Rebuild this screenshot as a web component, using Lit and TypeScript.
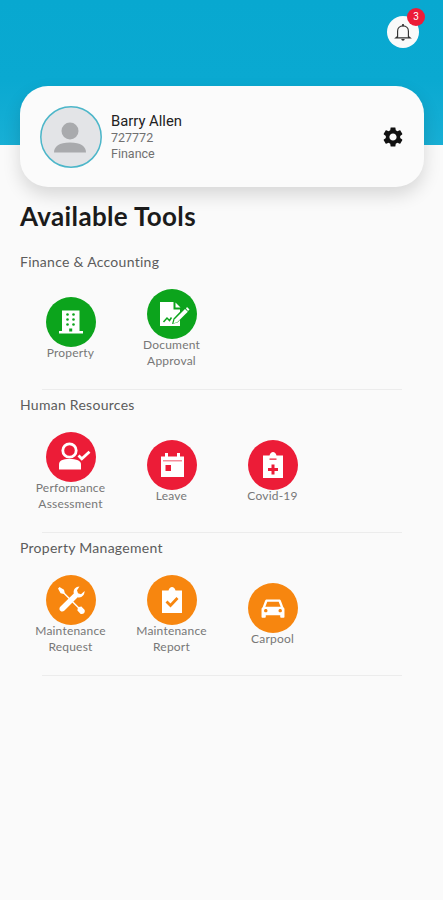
import { LitElement, html, css, svg } from "lit";
import { customElement } from "lit/decorators.js";

const G = "#0ca41c";
const R = "#ec1c37";
const O = "#f7860f";

const icons: Record<string, unknown> = {
  building: svg`<path fill="#fff" d="M16 13.500h17.500V34H37v2.500H13V34h3z"/><g fill="${G}"><circle cx="21.500" cy="17.500" r="1.300"/><circle cx="27.500" cy="17.500" r="1.300"/><circle cx="21.500" cy="22.500" r="1.300"/><circle cx="27.500" cy="22.500" r="1.300"/><circle cx="21.500" cy="27.500" r="1.300"/><circle cx="27.500" cy="27.500" r="1.300"/><path d="M23.200 31.500h3v3h-3z"/></g>`,
  doc: svg`<path fill="#fff" d="M13 13h13.500v7.500H33v2.300L26.500 29.500l-1.500 5.500 5.500-1.500 2.500-2.500v6H13z"/><path fill="#fff" d="M28.500 13.500l5 5h-5z"/><path fill="#fff" d="M27.500 30.500L38 20l2.800 2.800-10.600 10.400-3.700 1z"/><path fill="#fff" d="M39 19.500l1-1.500 2.500 2.500-1.500 1.500z"/><path fill="none" stroke="${G}" stroke-width="1.500" d="M16.500 33l3.500-4 2.500 2.500 2-3"/>`,
  person: svg`<circle cx="23.500" cy="18.500" r="6.700" fill="none" stroke="#fff" stroke-width="2.800"/><path fill="#fff" d="M13 37.500v-5c0-4 3.500-5.500 10.500-5.500s11.500 1.500 11.500 5.500v5z"/><path fill="none" stroke="#fff" stroke-width="2.800" d="M32.500 23.500l3.300 3.300 7.700-7"/>`,
  calendar: svg`<path fill="#fff" d="M14 16.500h4v-3.500h3v3.500h9v-3.500h3v3.500h4V37H14z"/><path fill="${R}" d="M16 20.500h19v.8H16zM18.500 25h5.500v6h-5.500z"/>`,
  clipboard: svg`<path fill="#fff" d="M15 15.500h6.500c.5-2 2-3.500 3.500-3.500s3 1.500 3.500 3.500H35V38H15z"/><path fill="${R}" d="M23.500 24.500h3v3.500H30v3h-3.500v3.500h-3V31H20v-3h3.500zM21.500 18.500h7v1.200h-7z"/>`,
  tools: svg`<path fill="#fff" d="M14 12.500l4.500 2.800.8 3.200 14 14 2.600-.4 3.300 3.300c.6 2.700-1.300 4.600-4 4l-3.300-3.300.4-2.600-14-14-3.200-.8L12.500 14z" transform="translate(-.5 -.5)"/><path fill="#fff" d="M33.500 11.500c-3.800 .2-6.500 3-5.700 7L14.500 31.500c-3 3 1 7 4 4l13.200-13.300c3.800 1 7-2 6.900-6.200l-3.600 3.200-3-1-1-3z"/>`,
  check: svg`<path fill="#fff" d="M15 15.500h6.500c.5-2 2-3.500 3.500-3.500s3 1.500 3.500 3.500H35V38H15z"/><path fill="none" stroke="${O}" stroke-width="2.800" d="M19.500 26.500l4 4 7-7.500"/>`,
  car: svg`<path transform="translate(25 25.500) scale(.85) translate(-25 -25.500)" fill="#fff" d="M34.300 16.500c-.3-.9-1.200-1.500-2.100-1.500H17.800c-1 0-1.800.6-2.100 1.500L12.800 24c-1 .6-1.300 1.400-1.300 2.500v9c0 .6.400 1 1 1h3c.6 0 1-.4 1-1v-2h17v2c0 .6.400 1 1 1h3c.6 0 1-.4 1-1v-9c0-1.100-.3-1.900-1.300-2.500zM16.500 30c-1.200 0-2-.8-2-2s.8-2 2-2 2 .8 2 2-.8 2-2 2zm17 0c-1.200 0-2-.8-2-2s.8-2 2-2 2 .8 2 2-.8 2-2 2zM16 23.500l2.300-6h13.400l2.300 6z"/>`,
};

const sections = [
  { title: "Finance & Accounting", color: G, tools: [
    { icon: "building", label: ["Property"] },
    { icon: "doc", label: ["Document", "Approval"] },
  ]},
  { title: "Human Resources", color: R, tools: [
    { icon: "person", label: ["Performance", "Assessment"] },
    { icon: "calendar", label: ["Leave"] },
    { icon: "clipboard", label: ["Covid-19"] },
  ]},
  { title: "Property Management", color: O, tools: [
    { icon: "tools", label: ["Maintenance", "Request"] },
    { icon: "check", label: ["Maintenance", "Report"] },
    { icon: "car", label: ["Carpool"] },
  ]},
];

@customElement("app-root")
export class AppRoot extends LitElement {
  static styles = css`
    :host { display: block; width: 443px; height: 900px; background: #fafafa; overflow: hidden; font-family: "Lato", sans-serif; }
    .hero { height: 145px; background: linear-gradient(#08a8d0 0%, #0aa9d1 55%, #18afd5 100%); display: flex; justify-content: flex-end; padding: 16px 24px 0 0; box-sizing: border-box; }
    .bell { position: relative; width: 32px; height: 32px; border-radius: 50%; background: #fafafa; display: flex; align-items: center; justify-content: center; }
    .bell svg { width: 20px; height: 20px; fill: none; stroke: #333; stroke-width: 1.400; }
    .badge { position: absolute; top: -8px; right: -6px; width: 18px; height: 18px; border-radius: 50%; background: #ec1c37; color: #fff; font: 10px/18px "Roboto", sans-serif; text-align: center; }
    .card { position: relative; margin: -59px 19px 0 20px; height: 101px; border-radius: 28px; background: #fbfbfb; box-shadow: 0 8px 18px rgba(0,0,0,.14); display: flex; align-items: center; padding: 0 20px; box-sizing: border-box; }
    .avatar { width: 62px; height: 62px; flex: none; }
    .avatar svg { display: block; width: 62px; height: 62px; }
    .info { margin-left: 9px; flex: 1; font-family: "Roboto", sans-serif; padding-top: 1px; }
    .name { font-size: 14.800px; line-height: 17px; color: #222; }
    .meta { font-size: 12.500px; line-height: 15.500px; color: #707070; }
    .gear { width: 24px; height: 24px; fill: #111; margin-right: -1px; }
    h1 { margin: 15px 0 0 20px; font-size: 26px; line-height: 28px; font-weight: 700; color: #1b1b1b; letter-spacing: .35px; }
    .section { padding-top: 5px; }
    .section:first-of-type { padding-top: 22px; }
    .section-title { margin: 0 0 0 20px; font-size: 14px; line-height: 20px; font-weight: 400; color: #5c5c5c; letter-spacing: .27px; }
    .row { margin: 16px 0 0 20px; display: grid; grid-template-columns: repeat(4, 101px); height: 81px; align-items: center; }
    .tool { display: flex; flex-direction: column; align-items: center; }
    .circle { width: 50px; height: 50px; border-radius: 50%; }
    .circle svg { display: block; width: 50px; height: 50px; }
    .label { margin-top: -2px; font-size: 12px; line-height: 16px; color: #777; text-align: center; letter-spacing: .2px; white-space: nowrap; }
    .divider { margin: 20px 41px 0 42px; height: 1px; background: #ececec; }
  `;

  render() {
    return html`
      <div class="hero">
        <div class="bell">
          <svg viewBox="0 0 24 24"><path d="M5.500 17.500V11c0-3.600 2.600-6.300 6.500-6.300s6.500 2.700 6.500 6.300v6.500l2 1.500h-17z"/><path fill="#333" stroke="none" d="M10 20.500h4c0 1.100-.9 2-2 2s-2-.9-2-2zM11 2.500h2v2.500h-2z"/></svg>
          <span class="badge">3</span>
        </div>
      </div>
      <div class="card">
        <div class="avatar">
          <svg viewBox="0 0 62 62"><circle cx="31" cy="31" r="30.200" fill="#e3e4e7" stroke="#4cb6c9" stroke-width="1.500"/><circle cx="30" cy="25" r="8.500" fill="#a9aaad"/><path fill="#a9aaad" d="M14 46.500c0-6 5-10 16-10s16 4 16 10z"/></svg>
        </div>
        <div class="info">
          <div class="name">Barry Allen</div>
          <div class="meta">727772</div>
          <div class="meta">Finance</div>
        </div>
        <svg class="gear" viewBox="0 0 24 24"><path d="M19.140 12.940c.04-.3.06-.61.06-.94 0-.32-.02-.64-.07-.94l2.030-1.580c.18-.14.23-.41.12-.61l-1.920-3.320c-.12-.22-.37-.29-.59-.22l-2.390.96c-.5-.38-1.030-.7-1.620-.94l-.36-2.540c-.04-.24-.24-.41-.48-.41h-3.840c-.24 0-.43.17-.47.41l-.36 2.540c-.59.24-1.130.57-1.620.94l-2.390-.96c-.22-.08-.47 0-.59.22L2.740 8.870c-.12.21-.08.47.12.61l2.030 1.580c-.05.3-.09.63-.09.94s.02.64.07.94l-2.030 1.580c-.18.14-.23.41-.12.61l1.920 3.320c.12.22.37.29.59.22l2.390-.96c.5.38 1.030.7 1.620.94l.36 2.540c.05.24.24.41.48.41h3.840c.24 0 .44-.17.47-.41l.36-2.540c.59-.24 1.130-.56 1.620-.94l2.390.96c.22.08.47 0 .59-.22l1.920-3.320c.12-.22.07-.47-.12-.61l-2.010-1.580zM12 15.600c-1.980 0-3.600-1.620-3.600-3.600s1.620-3.600 3.600-3.600 3.600 1.620 3.600 3.600-1.620 3.600-3.600 3.600z"/></svg>
      </div>
      <h1>Available Tools</h1>
      ${sections.map((s) => html`
        <section class="section">
          <h2 class="section-title">${s.title}</h2>
          <div class="row">
            ${s.tools.map((t) => html`
              <div class="tool">
                <div class="circle" style="background:${s.color}"><svg viewBox="0 0 50 50">${icons[t.icon]}</svg></div>
                <div class="label">${t.label.map((l) => html`<div>${l}</div>`)}</div>
              </div>`)}
          </div>
          <div class="divider"></div>
        </section>`)}
    `;
  }
}
